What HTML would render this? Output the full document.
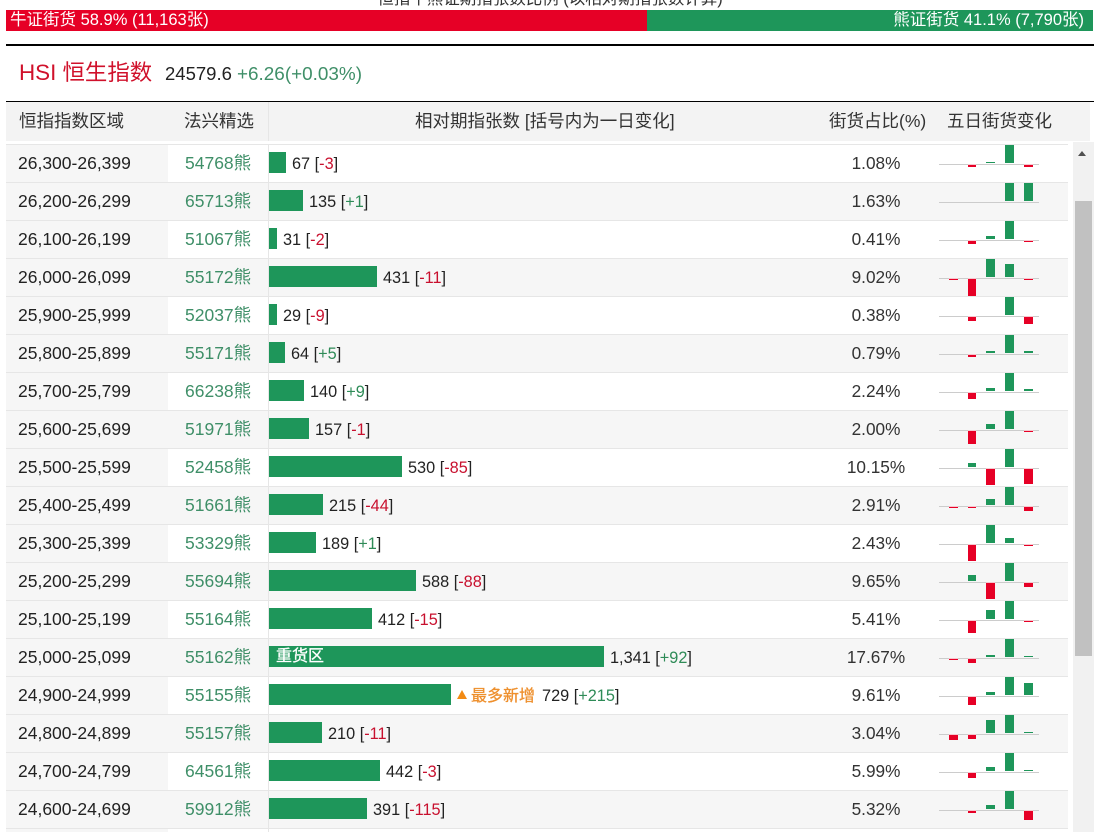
<!DOCTYPE html>
<html lang="zh"><head><meta charset="utf-8"><title>恒指牛熊证</title>
<style>
html,body{margin:0;padding:0;background:#fff;overflow:hidden}
body{width:1094px;height:832px;position:relative;overflow:hidden;font-family:"Liberation Sans","Noto Sans CJK SC",sans-serif;color:#222}
.a{position:absolute;white-space:nowrap}
.r{position:absolute;left:6px;width:1062px;height:38px;box-shadow:inset 0 1px #e6e6e6;line-height:38px}
.g{background:#f6f6f6}
.c1{position:absolute;left:0;top:0;width:162px;height:38px;background:#f6f6f6;box-shadow:inset 0 1px #e6e6e6;font-size:17.5px;padding-left:12px;box-sizing:border-box;color:#222}
.c2{position:absolute;left:179px;top:0;font-size:17.5px;color:#3f8f68}
.v{position:absolute;left:262px;top:1px;width:1px;height:37px;background:#e6e6e6}
.n{position:absolute;left:263px;top:1px;font-size:16.3px;white-space:nowrap;height:37px}
.n s{display:inline-block;text-decoration:none;height:21px;background:#1e965a;vertical-align:top;margin-top:7px;margin-right:6px;color:#fff;line-height:21px;font-size:16px}
.n u{text-decoration:none;color:#c8102e}.n em{font-style:normal;color:#2e8b57}
.p{position:absolute;left:820px;width:100px;top:0;text-align:center;font-size:17.2px;color:#333}
.l{position:absolute;left:933px;top:20px;width:100px;height:1px;background:#ccc}
.up,.dn{position:absolute;width:9px}
.up{bottom:19px;background:#1e965a}
.dn{top:21px;background:#e60026;box-shadow:0 -1px #f6c6ce}
.b1{left:943px}.b2{left:962px;width:8px}.b3{left:980px}.b4{left:999px}.b5{left:1018px}
.h{position:absolute;font-size:17.5px;line-height:39px;top:102px;color:#333;white-space:nowrap}
</style></head><body>
<div class="a" style="left:0;width:1100px;text-align:center;top:-11px;font-size:16.5px;line-height:20px;color:#333">恒指牛熊证期指张数比例 (以相对期指张数计算)</div>
<div class="a" style="left:6px;top:10px;width:641px;height:21px;background:#e60026;color:#fff;font-size:16.5px;line-height:21px;padding-left:4px;box-sizing:border-box">牛证街货 58.9% (11,163张)</div>
<div class="a" style="left:647px;top:10px;width:446px;height:21px;background:#1e965a;color:#fff;font-size:16.5px;line-height:21px;padding-right:9px;box-sizing:border-box;text-align:right">熊证街货 41.1% (7,790张)</div>
<div class="a" style="left:6px;top:44px;width:1088px;height:2px;background:#000"></div>
<div class="a" style="left:19px;top:58px;font-size:22.4px;line-height:30px;color:#d0112b">HSI 恒生指数</div>
<div class="a" style="left:165px;top:60px;font-size:18.5px;line-height:28px;color:#222">24579.6 <span style="color:#3f8f68;font-size:18.9px">+6.26(+0.03%)</span></div>

<div class="a" style="left:6px;top:101px;width:1088px;height:1px;background:#000"></div>
<div class="a" style="left:6px;top:102px;width:1084px;height:39px;background:#f3f3f3"></div>
<div class="a" style="left:268px;top:102px;width:1px;height:39px;background:#e6e6e6"></div>
<div class="h" style="left:19px">恒指指数区域</div>
<div class="h" style="left:184px">法兴精选</div>
<div class="h" style="left:415px">相对期指张数 [括号内为一日变化]</div>
<div class="h" style="left:829px">街货占比(%)</div>
<div class="h" style="left:947px">五日街货变化</div>

<div class="r" style="top:144px"><div class="c1">26,300-26,399</div><div class="c2">54768熊</div><div class="v"></div><div class="n"><s style="width:17px"></s>67 [<u>-3</u>]</div><div class="p">1.08%</div><div class="l"></div><i class="dn b2" style="height:2px"></i><i class="up b3" style="height:1px"></i><i class="up b4" style="height:18px"></i><i class="dn b5" style="height:2px"></i></div>
<div class="r g" style="top:182px"><div class="c1">26,200-26,299</div><div class="c2">65713熊</div><div class="v"></div><div class="n"><s style="width:34px"></s>135 [<em>+1</em>]</div><div class="p">1.63%</div><div class="l"></div><i class="up b4" style="height:18px"></i><i class="up b5" style="height:18px"></i></div>
<div class="r" style="top:220px"><div class="c1">26,100-26,199</div><div class="c2">51067熊</div><div class="v"></div><div class="n"><s style="width:8px"></s>31 [<u>-2</u>]</div><div class="p">0.41%</div><div class="l"></div><i class="dn b2" style="height:3px"></i><i class="up b3" style="height:3px"></i><i class="up b4" style="height:18px"></i><i class="dn b5" style="height:1px"></i></div>
<div class="r g" style="top:258px"><div class="c1">26,000-26,099</div><div class="c2">55172熊</div><div class="v"></div><div class="n"><s style="width:108px"></s>431 [<u>-11</u>]</div><div class="p">9.02%</div><div class="l"></div><i class="dn b1" style="height:1px"></i><i class="dn b2" style="height:17px"></i><i class="up b3" style="height:18px"></i><i class="up b4" style="height:13px"></i><i class="dn b5" style="height:1px"></i></div>
<div class="r" style="top:296px"><div class="c1">25,900-25,999</div><div class="c2">52037熊</div><div class="v"></div><div class="n"><s style="width:8px"></s>29 [<u>-9</u>]</div><div class="p">0.38%</div><div class="l"></div><i class="dn b2" style="height:4px"></i><i class="up b4" style="height:18px"></i><i class="dn b5" style="height:7px"></i></div>
<div class="r g" style="top:334px"><div class="c1">25,800-25,899</div><div class="c2">55171熊</div><div class="v"></div><div class="n"><s style="width:16px"></s>64 [<em>+5</em>]</div><div class="p">0.79%</div><div class="l"></div><i class="dn b2" style="height:2px"></i><i class="up b3" style="height:2px"></i><i class="up b4" style="height:18px"></i><i class="up b5" style="height:2px"></i></div>
<div class="r" style="top:372px"><div class="c1">25,700-25,799</div><div class="c2">66238熊</div><div class="v"></div><div class="n"><s style="width:35px"></s>140 [<em>+9</em>]</div><div class="p">2.24%</div><div class="l"></div><i class="dn b2" style="height:6px"></i><i class="up b3" style="height:3px"></i><i class="up b4" style="height:18px"></i><i class="up b5" style="height:2px"></i></div>
<div class="r g" style="top:410px"><div class="c1">25,600-25,699</div><div class="c2">51971熊</div><div class="v"></div><div class="n"><s style="width:40px"></s>157 [<u>-1</u>]</div><div class="p">2.00%</div><div class="l"></div><i class="dn b2" style="height:13px"></i><i class="up b3" style="height:5px"></i><i class="up b4" style="height:18px"></i><i class="dn b5" style="height:1px"></i></div>
<div class="r" style="top:448px"><div class="c1">25,500-25,599</div><div class="c2">52458熊</div><div class="v"></div><div class="n"><s style="width:133px"></s>530 [<u>-85</u>]</div><div class="p">10.15%</div><div class="l"></div><i class="up b2" style="height:4px"></i><i class="dn b3" style="height:16px"></i><i class="up b4" style="height:18px"></i><i class="dn b5" style="height:15px"></i></div>
<div class="r g" style="top:486px"><div class="c1">25,400-25,499</div><div class="c2">51661熊</div><div class="v"></div><div class="n"><s style="width:54px"></s>215 [<u>-44</u>]</div><div class="p">2.91%</div><div class="l"></div><i class="dn b1" style="height:1px"></i><i class="dn b2" style="height:1px"></i><i class="up b3" style="height:6px"></i><i class="up b4" style="height:18px"></i><i class="dn b5" style="height:4px"></i></div>
<div class="r" style="top:524px"><div class="c1">25,300-25,399</div><div class="c2">53329熊</div><div class="v"></div><div class="n"><s style="width:47px"></s>189 [<em>+1</em>]</div><div class="p">2.43%</div><div class="l"></div><i class="dn b2" style="height:16px"></i><i class="up b3" style="height:18px"></i><i class="up b4" style="height:5px"></i><i class="dn b5" style="height:1px"></i></div>
<div class="r g" style="top:562px"><div class="c1">25,200-25,299</div><div class="c2">55694熊</div><div class="v"></div><div class="n"><s style="width:147px"></s>588 [<u>-88</u>]</div><div class="p">9.65%</div><div class="l"></div><i class="up b2" style="height:6px"></i><i class="dn b3" style="height:16px"></i><i class="up b4" style="height:18px"></i><i class="dn b5" style="height:4px"></i></div>
<div class="r" style="top:600px"><div class="c1">25,100-25,199</div><div class="c2">55164熊</div><div class="v"></div><div class="n"><s style="width:103px"></s>412 [<u>-15</u>]</div><div class="p">5.41%</div><div class="l"></div><i class="dn b2" style="height:12px"></i><i class="up b3" style="height:9px"></i><i class="up b4" style="height:18px"></i><i class="dn b5" style="height:1px"></i></div>
<div class="r g" style="top:638px"><div class="c1">25,000-25,099</div><div class="c2">55162熊</div><div class="v"></div><div class="n"><s style="width:328px;padding-left:7px;-webkit-text-stroke:0.3px #fff">重货区</s>1,341 [<em>+92</em>]</div><div class="p">17.67%</div><div class="l"></div><i class="dn b1" style="height:1px"></i><i class="dn b2" style="height:4px"></i><i class="up b3" style="height:2px"></i><i class="up b4" style="height:18px"></i><i class="up b5" style="height:1px"></i></div>
<div class="r" style="top:676px"><div class="c1">24,900-24,999</div><div class="c2">55155熊</div><div class="v"></div><div class="n"><s style="width:182px"></s><span style="display:inline-block;width:0;height:0;border-left:5px solid transparent;border-right:5px solid transparent;border-bottom:9px solid #f28a14;margin-right:4px;vertical-align:2px"></span><span style="color:#ee8f2c;margin-right:7px;font-size:16px;-webkit-text-stroke:0.3px #ee8f2c">最多新增</span>729 [<em>+215</em>]</div><div class="p">9.61%</div><div class="l"></div><i class="dn b2" style="height:8px"></i><i class="up b3" style="height:3px"></i><i class="up b4" style="height:18px"></i><i class="up b5" style="height:12px"></i></div>
<div class="r g" style="top:714px"><div class="c1">24,800-24,899</div><div class="c2">55157熊</div><div class="v"></div><div class="n"><s style="width:53px"></s>210 [<u>-11</u>]</div><div class="p">3.04%</div><div class="l"></div><i class="dn b1" style="height:5px"></i><i class="dn b2" style="height:4px"></i><i class="up b3" style="height:13px"></i><i class="up b4" style="height:18px"></i><i class="up b5" style="height:1px"></i></div>
<div class="r" style="top:752px"><div class="c1">24,700-24,799</div><div class="c2">64561熊</div><div class="v"></div><div class="n"><s style="width:111px"></s>442 [<u>-3</u>]</div><div class="p">5.99%</div><div class="l"></div><i class="dn b2" style="height:5px"></i><i class="up b3" style="height:4px"></i><i class="up b4" style="height:18px"></i><i class="up b5" style="height:1px"></i></div>
<div class="r g" style="top:790px"><div class="c1">24,600-24,699</div><div class="c2">59912熊</div><div class="v"></div><div class="n"><s style="width:98px"></s>391 [<u>-115</u>]</div><div class="p">5.32%</div><div class="l"></div><i class="dn b2" style="height:2px"></i><i class="up b3" style="height:4px"></i><i class="up b4" style="height:18px"></i><i class="dn b5" style="height:9px"></i></div>
<div class="r" style="top:828px"><div class="c1"></div><div class="v"></div></div>

<div class="a" style="left:1073px;top:142px;width:21px;height:690px;background:#f1f1f1"></div>
<div class="a" style="left:1078px;top:151px;width:0;height:0;border-left:4.5px solid transparent;border-right:4.5px solid transparent;border-bottom:5px solid #505050"></div>
<div class="a" style="left:1075px;top:201px;width:17px;height:455px;background:#c1c1c1"></div>
</body></html>
